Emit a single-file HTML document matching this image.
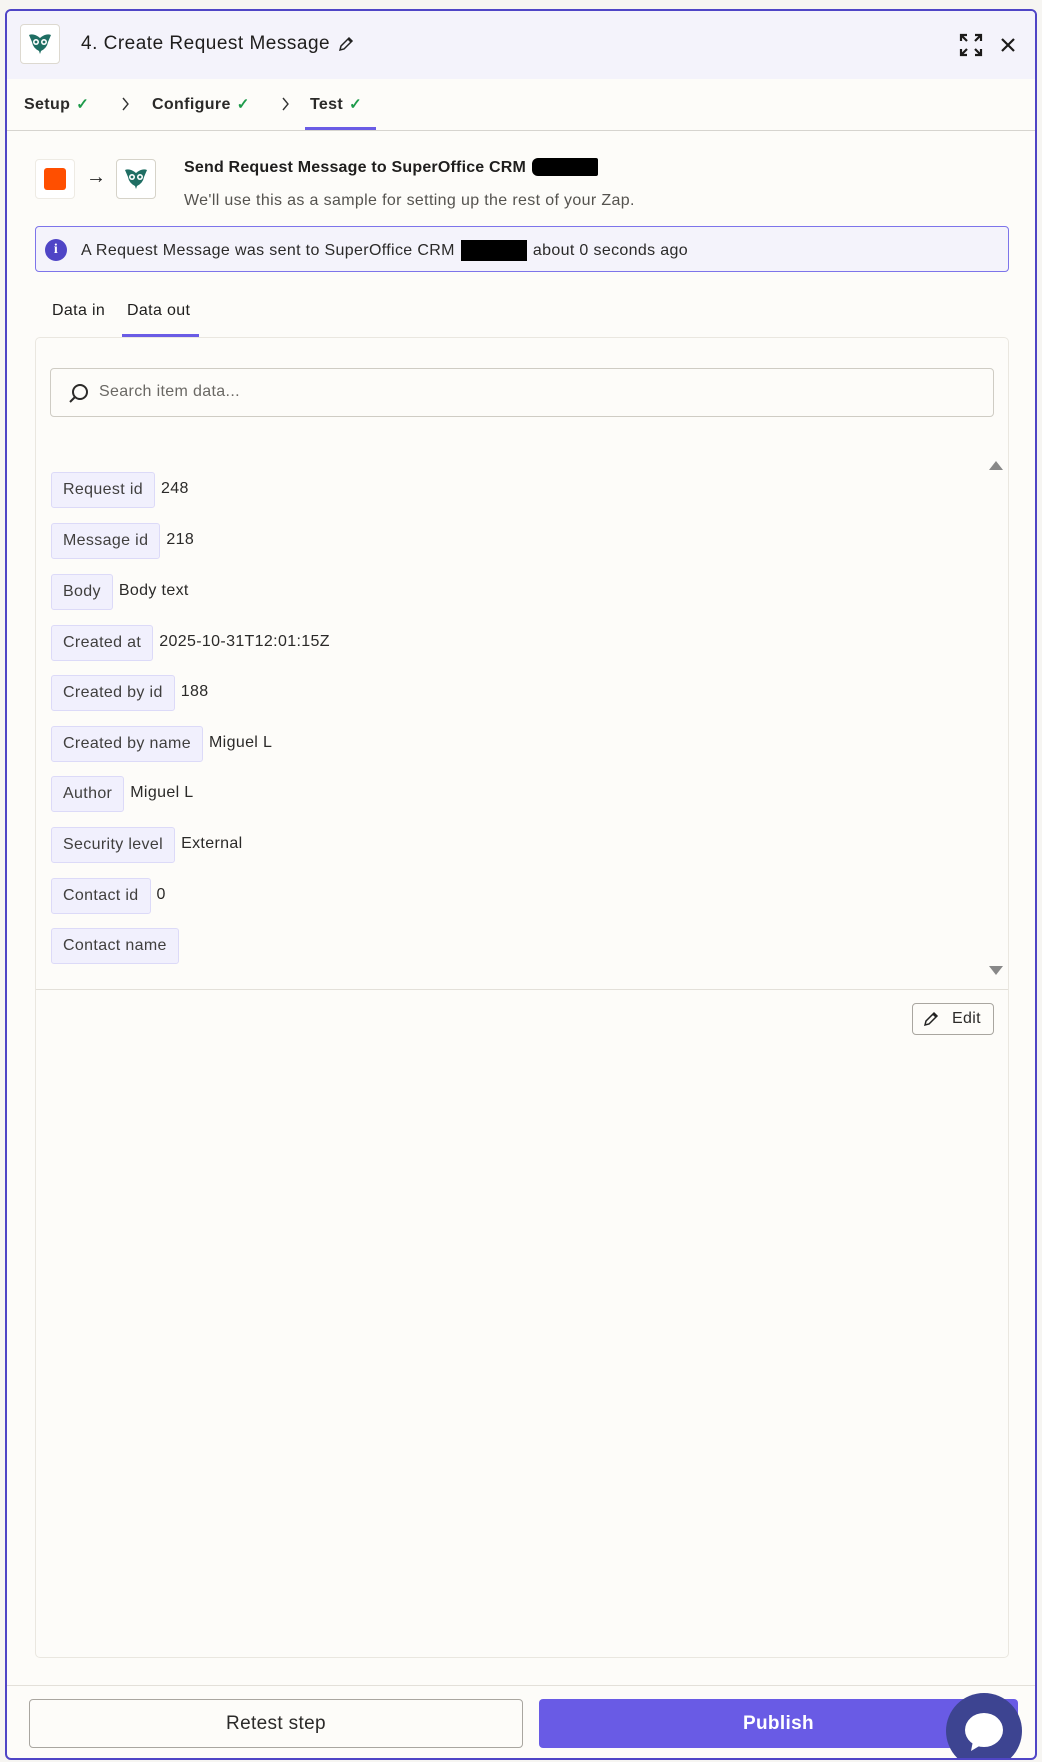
<!DOCTYPE html>
<html><head><meta charset="utf-8"><style>
*{box-sizing:border-box;margin:0;padding:0}
body{width:1042px;height:1762px;background:#f6f5f2;font-family:"Liberation Sans",sans-serif;color:#2b2a29;position:relative;overflow:hidden;letter-spacing:0.35px}
.frame{position:absolute;left:5px;top:9px;width:1032px;height:1751px;border:2px solid #4f45c6;border-radius:6px;background:#fdfcf9;overflow:hidden}
.a{position:absolute}
.hdr{left:0;top:0;width:100%;height:68px;background:#f4f3fb}
.row{position:absolute;left:44px;height:36px;display:flex;align-items:center;white-space:nowrap}
.pill{height:36px;background:#f1f0fd;border:1px solid #dcdaf8;border-radius:3px;font-size:16px;color:#403f3e;padding:0 11px;line-height:34px}
.val{font-size:16px;color:#2b2a29;margin-left:6px;margin-top:-3px}
.ck{color:#1e9b4b;font-size:15px;margin-left:6px}
</style></head><body>
<div class="frame">
 <div class="a hdr"></div>
 <div class="a" style="left:13px;top:13px;width:40px;height:40px;border:1px solid #ddd9d0;border-radius:4px;background:#fff"></div>
 <svg class="a" style="left:21px;top:22px" width="24" height="22" viewBox="0 0 24 22"><path d="M1 2 Q6 0 12 5 Q18 0 23 2 L20 9 Q19 15 13 18 L12 21 L11 18 Q5 15 4 9 Z" fill="#1f6e63"/><circle cx="8" cy="9" r="3" fill="#fff"/><circle cx="16" cy="9" r="3" fill="#fff"/><circle cx="8" cy="9" r="1.4" fill="#1f6e63"/><circle cx="16" cy="9" r="1.4" fill="#1f6e63"/></svg>
 <div class="a" style="left:74px;top:22px;font-size:19px;color:#1f1e1d;letter-spacing:0.5px;display:flex;align-items:center">4. Create Request Message<svg style="margin-left:7px" width="18" height="18" viewBox="0 0 18 18"><path d="M3 15 L4 11 L12 3 L15 6 L7 14 Z M11 4 L14 7" fill="none" stroke="#222" stroke-width="1.5"/></svg></div>
 <svg class="a" style="left:952px;top:22px" width="24" height="24" viewBox="0 0 24 24" fill="none" stroke="#1b1a19" stroke-width="2.2"><path d="M2 8V2h6M2 2l6 6M22 8V2h-6M22 2l-6 6M2 16v6h6M2 22l6-6M22 16v6h-6M22 22l-6-6"/></svg>
 <svg class="a" style="left:993px;top:26px" width="16" height="16" viewBox="0 0 16 16" stroke="#1b1a19" stroke-width="2.2"><path d="M2 2L14 14M14 2L2 14"/></svg>

 <div class="a" style="left:17px;top:84px;font-size:16px;font-weight:bold;color:#2b2a29">Setup<span class="ck">✓</span></div>
 <svg class="a" style="left:113px;top:85px" width="10" height="16" viewBox="0 0 10 16" fill="none" stroke="#333" stroke-width="1.4"><path d="M3 2l5 6-5 6"/></svg>
 <div class="a" style="left:145px;top:84px;font-size:16px;font-weight:bold;color:#2b2a29">Configure<span class="ck">✓</span></div>
 <svg class="a" style="left:273px;top:85px" width="10" height="16" viewBox="0 0 10 16" fill="none" stroke="#333" stroke-width="1.4"><path d="M3 2l5 6-5 6"/></svg>
 <div class="a" style="left:303px;top:84px;font-size:16px;font-weight:bold;color:#2b2a29">Test<span class="ck">✓</span></div>
 <div class="a" style="left:298px;top:116px;width:71px;height:3px;background:#6a5ce5"></div>
 <div class="a" style="left:0;top:119px;width:100%;height:1px;background:#d6d4cf"></div>

 <div class="a" style="left:28px;top:148px;width:40px;height:40px;border:1px solid #eeebe4;border-radius:4px;background:#fff"></div>
 <div class="a" style="left:37px;top:157px;width:22px;height:22px;background:#ff4f00;border-radius:3px"></div>
 <div class="a" style="left:79px;top:155px;font-size:20px;color:#222">→</div>
 <div class="a" style="left:109px;top:148px;width:40px;height:40px;border:1px solid #d6d3c9;border-radius:4px;background:#fff"></div>
 <svg class="a" style="left:117px;top:157px" width="24" height="22" viewBox="0 0 24 22"><path d="M1 2 Q6 0 12 5 Q18 0 23 2 L20 9 Q19 15 13 18 L12 21 L11 18 Q5 15 4 9 Z" fill="#1f6e63"/><circle cx="8" cy="9" r="3" fill="#fff"/><circle cx="16" cy="9" r="3" fill="#fff"/><circle cx="8" cy="9" r="1.4" fill="#1f6e63"/><circle cx="16" cy="9" r="1.4" fill="#1f6e63"/></svg>
 <div class="a" style="left:177px;top:148px;font-size:16px;font-weight:bold;color:#1f1e1d;display:flex;align-items:center;letter-spacing:0.2px">Send Request Message to SuperOffice CRM<span style="display:inline-block;margin-left:6px;width:66px;height:18px;background:#000;border-radius:6px 2px 2px 6px;margin-top:-2px"></span></div>
 <div class="a" style="left:177px;top:181px;font-size:16px;color:#55534f">We'll use this as a sample for setting up the rest of your Zap.</div>

 <div class="a" style="left:28px;top:215px;width:974px;height:46px;background:#f4f3fb;border:1px solid #7d74ea;border-radius:4px"></div>
 <div class="a" style="left:38px;top:228px;width:22px;height:22px;border-radius:50%;background:#4f45c6;color:#fff;font-size:14px;font-weight:bold;text-align:center;line-height:22px;font-family:'Liberation Serif',serif">i</div>
 <div class="a" style="left:74px;top:229px;font-size:16px;color:#2b2a29;display:flex;align-items:center;white-space:nowrap">A Request Message was sent to SuperOffice CRM<span style="display:inline-block;width:66px;height:21px;background:#000;margin:0 6px"></span>about 0 seconds ago</div>

 <div class="a" style="left:45px;top:291px;font-size:16px;color:#1f1e1d">Data in</div>
 <div class="a" style="left:120px;top:291px;font-size:16px;color:#1f1e1d">Data out</div>
 <div class="a" style="left:115px;top:323px;width:77px;height:3px;background:#6a5ce5"></div>

 <div class="a" style="left:28px;top:326px;width:974px;height:1321px;border:1px solid #eae7e0;border-radius:5px"></div>
 <div class="a" style="left:43px;top:357px;width:944px;height:49px;border:1px solid #cfccc4;border-radius:4px;background:#fdfcf9"></div>
 <svg class="a" style="left:61px;top:372px" width="22" height="22" viewBox="0 0 22 22" fill="none" stroke="#2b2a29" stroke-width="2"><circle cx="12" cy="9" r="7"/><path d="M7 14 L2 19"/></svg>
 <div class="a" style="left:92px;top:372px;font-size:16px;color:#6a6864">Search item data...</div>

 <div class="row" style="top:461px"><span class="pill">Request id</span><span class="val">248</span></div>
 <div class="row" style="top:512px"><span class="pill">Message id</span><span class="val">218</span></div>
 <div class="row" style="top:563px"><span class="pill">Body</span><span class="val">Body text</span></div>
 <div class="row" style="top:614px"><span class="pill">Created at</span><span class="val">2025-10-31T12:01:15Z</span></div>
 <div class="row" style="top:664px"><span class="pill">Created by id</span><span class="val">188</span></div>
 <div class="row" style="top:715px"><span class="pill">Created by name</span><span class="val">Miguel L</span></div>
 <div class="row" style="top:765px"><span class="pill">Author</span><span class="val">Miguel L</span></div>
 <div class="row" style="top:816px"><span class="pill">Security level</span><span class="val">External</span></div>
 <div class="row" style="top:867px"><span class="pill">Contact id</span><span class="val">0</span></div>
 <div class="row" style="top:917px"><span class="pill">Contact name</span></div>

 <div class="a" style="left:982px;top:450px;width:0;height:0;border-left:7px solid transparent;border-right:7px solid transparent;border-bottom:9px solid #888"></div>
 <div class="a" style="left:982px;top:955px;width:0;height:0;border-left:7px solid transparent;border-right:7px solid transparent;border-top:9px solid #888"></div>
 <div class="a" style="left:29px;top:978px;width:972px;height:1px;background:#e3e0d9"></div>

 <div class="a" style="left:905px;top:992px;width:82px;height:32px;border:1px solid #a9a6a0;border-radius:4px"></div>
 <svg class="a" style="left:915px;top:999px" width="18" height="18" viewBox="0 0 18 18"><path d="M3 15 L4 11 L12 3 L15 6 L7 14 Z M11 4 L14 7" fill="none" stroke="#222" stroke-width="1.5"/></svg>
 <div class="a" style="left:945px;top:999px;font-size:16px;color:#2b2a29">Edit</div>

 <div class="a" style="left:0;top:1674px;width:100%;height:1px;background:#e3e0d9"></div>
 <div class="a" style="left:22px;top:1688px;width:494px;height:49px;border:1px solid #a9a6a0;border-radius:4px;text-align:center;line-height:47px;font-size:19px;color:#2b2a29">Retest step</div>
 <div class="a" style="left:532px;top:1688px;width:479px;height:49px;background:#695be5;border-radius:4px;text-align:center;line-height:49px;font-size:19px;font-weight:bold;color:#fff">Publish</div>
 <div class="a" style="left:939px;top:1682px;width:76px;height:76px;border-radius:50%;background:#3d4491"></div>
 <svg class="a" style="left:956px;top:1700px" width="42" height="42" viewBox="0 0 42 42"><ellipse cx="21" cy="19" rx="19" ry="17" fill="#fff"/><path d="M10 30 L8 40 L18 34 Z" fill="#fff"/></svg>
</div>
</body></html>
